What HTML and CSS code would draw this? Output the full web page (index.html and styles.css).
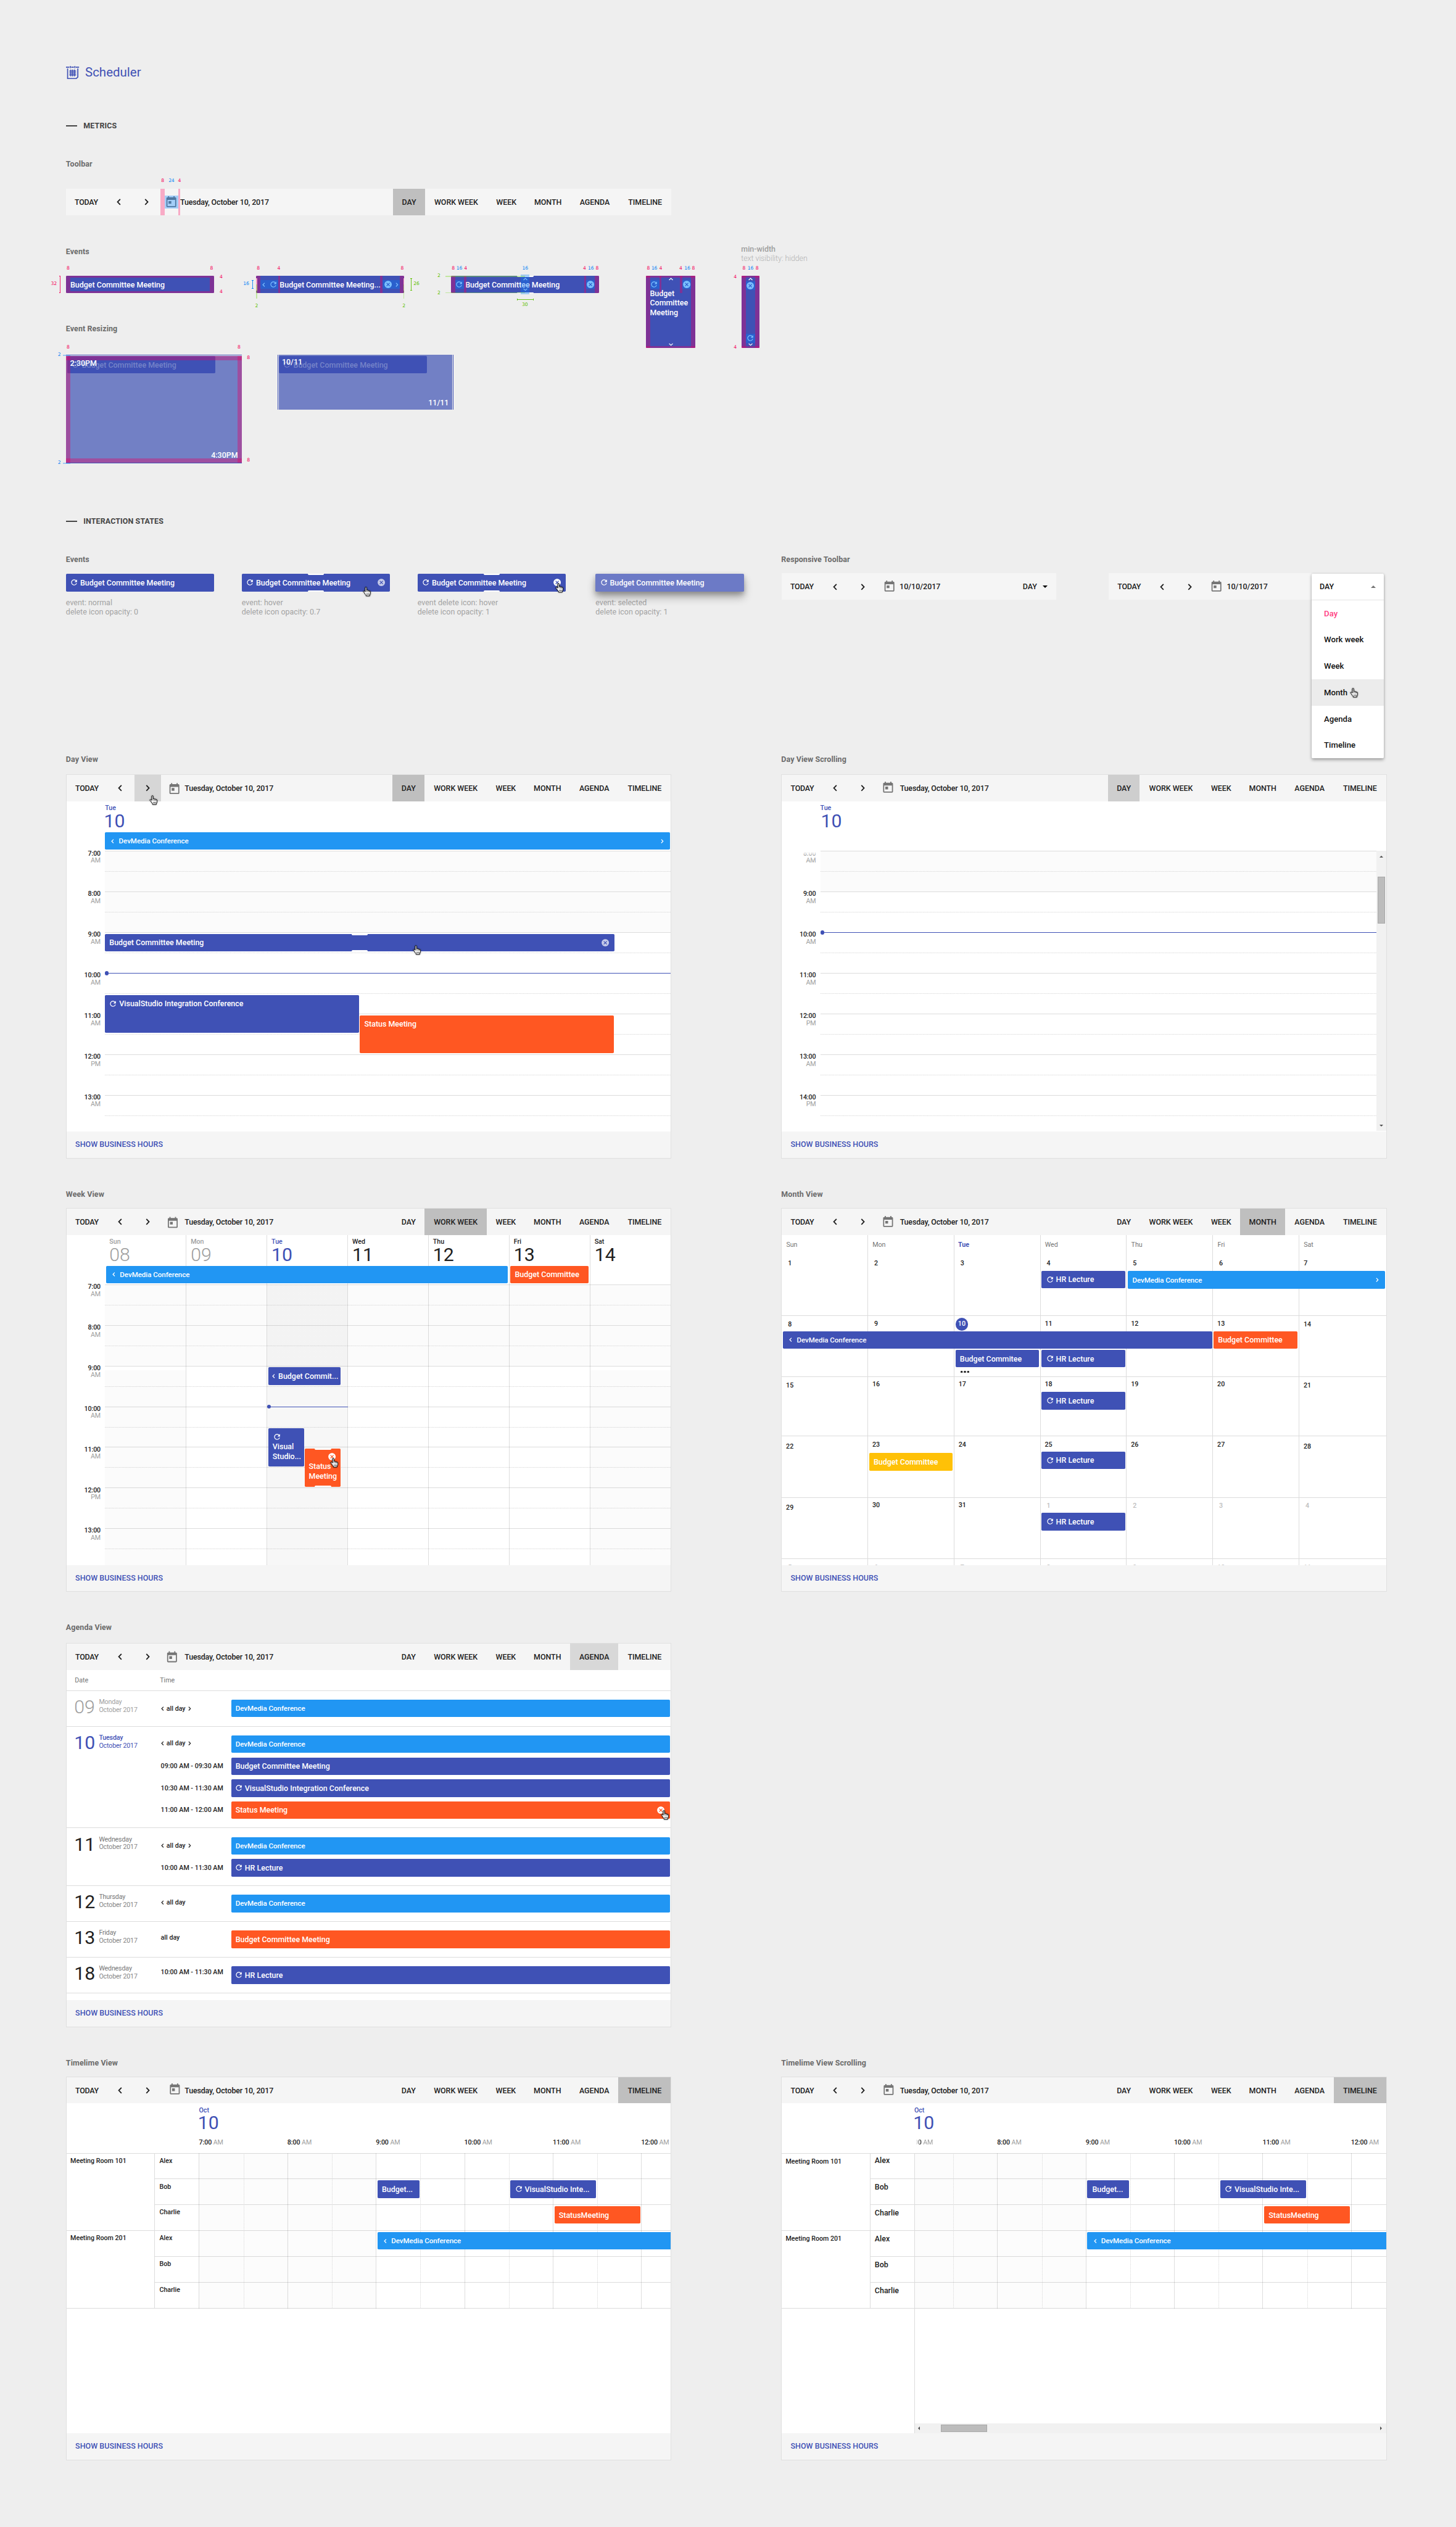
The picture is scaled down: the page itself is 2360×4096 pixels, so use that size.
FILE: index.html
```html
<!DOCTYPE html>
<html lang="en">
<head>
<meta charset="utf-8">
<title>Scheduler</title>
<link rel="stylesheet" href="styles.css">
</head>
<body>
<svg class="defs" xmlns="http://www.w3.org/2000/svg">
  <symbol id="today" viewBox="0 0 24 24"><path d="M19 3h-1V1h-2v2H8V1H6v2H5c-1.11 0-1.99.9-1.99 2L3 19c0 1.1.89 2 2 2h14c1.1 0 2-.9 2-2V5c0-1.1-.9-2-2-2zm0 16H5V8h14v11zM7 10h5v5H7z" fill="currentColor"/></symbol>
  <symbol id="loop" viewBox="0 0 24 24"><path d="M17.65 6.35C16.2 4.9 14.21 4 12 4c-4.42 0-7.99 3.58-7.99 8s3.57 8 7.99 8c3.73 0 6.84-2.55 7.73-6h-2.08c-.82 2.33-3.04 4-5.65 4-3.31 0-6-2.69-6-6s2.69-6 6-6c1.66 0 3.14.69 4.22 1.78L13 11h7V4l-2.35 2.35z" fill="currentColor"/></symbol>
  <symbol id="cancel" viewBox="0 0 24 24"><path d="M12 2C6.47 2 2 6.47 2 12s4.47 10 10 10 10-4.47 10-10S17.53 2 12 2zm5 13.59L15.59 17 12 13.41 8.41 17 7 15.59 10.59 12 7 8.41 8.41 7 12 10.59 15.59 7 17 8.41 13.41 12 17 15.59z" fill="currentColor"/></symbol>
  <symbol id="left" viewBox="0 0 8 12"><path d="M6.6 1L1.8 6l4.8 5" fill="none" stroke="currentColor" stroke-width="2.1"/></symbol>
  <symbol id="right" viewBox="0 0 8 12"><path d="M1.4 1l4.8 5-4.8 5" fill="none" stroke="currentColor" stroke-width="2.1"/></symbol>
  <symbol id="up" viewBox="0 0 12 8"><path d="M1 6.6l5-4.8 5 4.8" fill="none" stroke="currentColor" stroke-width="2.1"/></symbol>
  <symbol id="down" viewBox="0 0 12 8"><path d="M1 1.4l5 4.8 5-4.8" fill="none" stroke="currentColor" stroke-width="2.1"/></symbol>
  <symbol id="hand" viewBox="0 0 16 18"><path d="M4.5 2Q4.5.8 5.7.8 7 .8 7 2V6.3Q9.2 5.6 9.5 7 11.4 6.3 11.8 7.8 14 7.3 14 9.2V12Q14 14 12.8 15V16.8H6V15.4Q4.8 14.4 3.8 12.4 2.6 10.6 1.5 9.6.6 8.6 1.6 8 2.8 7.4 4.5 9.4Z" fill="#fff" stroke="#000" stroke-width="1.1"/><path d="M7 6.3V9.8M9.5 7V10M11.8 8V10.3M7.5 12V15M9.6 12V15M11.6 12V15" stroke="#000" stroke-width=".8"/></symbol>
  <symbol id="logo" viewBox="0 0 24 24"><path d="M0 2h6M9.5 2h4.8M17.8 2H24M2.9 4.6V23h15.6l3-3V4.6" fill="none" stroke="currentColor" stroke-width="1.9"/><path d="M7.9 0v4M16.1 0v4M8.7 6.6v12.2M12.1 6.6v12.2M15.5 6.6v12.2M6 9.3h12.4M6 12.7h12.4M6 16.1h12.4" stroke="currentColor" stroke-width="1.8"/></symbol>
</svg>

<main class="page">
  <header class="brand"><svg><use href="#logo"/></svg><span>Scheduler</span></header>

  <h2 class="section">METRICS</h2>
  <h3 class="label m-toolbar">Toolbar</h3>
  <div class="toolbar bare">
    <span class="today">TODAY</span>
    <span class="nav"><svg><use href="#left"/></svg></span>
    <span class="nav"><svg><use href="#right"/></svg></span>
    <svg class="cal"><use href="#today"/></svg>
    <span class="date">Tuesday, October 10, 2017</span>
    <nav class="tabs"><b class="on">DAY</b><b>WORK WEEK</b><b>WEEK</b><b>MONTH</b><b>AGENDA</b><b>TIMELINE</b></nav>
    <i class="pk" style="--x:172px;--y:0px;--w:8px;--h:48px"></i>
    <i class="bl" style="--x:180px;--y:12px;--w:24px;--h:24px"></i>
    <i class="pk" style="--x:204px;--y:0px;--w:4px;--h:48px"></i>
    <em class="cp" style="--x:176px;--y:-14px">8</em>
    <em class="cb" style="--x:192px;--y:-14px">24</em>
    <em class="cp" style="--x:206.5px;--y:-14px">4</em>
  </div>

  <section class="metrics">
    <div class="m-left">
      <h3 class="label">Events</h3>
      <div class="m-row">
        <div class="spec">
          <div class="ev">Budget Committee Meeting</div>
          <i class="pk" style="--x:0px;--y:0px;--w:8px;--h:32px"></i>
          <i class="pk" style="--x:262px;--y:0px;--w:8px;--h:32px"></i>
          <i class="pk" style="--x:8px;--y:0px;--w:254px;--h:4px"></i>
          <i class="pk" style="--x:8px;--y:28px;--w:254px;--h:4px"></i>
          <s class="vbeam cp" style="--x:-12.5px;--y:0px;--h:32px"></s>
          <em class="cp" style="--x:-22px;--y:15.5px">32</em>
          <em class="cp" style="--x:4px;--y:-13.5px">8</em>
          <em class="cp" style="--x:265px;--y:-13.5px">8</em>
          <em class="cp" style="--x:282.5px;--y:2.5px">4</em>
          <em class="cp" style="--x:282.5px;--y:29.5px">4</em>
        </div>
        <div class="spec">
          <div class="ev wide"><svg class="chev"><use href="#left"/></svg><svg class="ic"><use href="#loop"/></svg><span>Budget Committee Meeting...</span><svg class="ic x"><use href="#cancel"/></svg><svg class="chev"><use href="#right"/></svg></div>
          <i class="wh" style="--x:0px;--y:5px;--w:2px;--h:22px"></i>
          <i class="wh" style="--x:268px;--y:5px;--w:2px;--h:22px"></i>
          <i class="pk" style="--x:0px;--y:0px;--w:8px;--h:32px"></i>
          <i class="bl" style="--x:8px;--y:8px;--w:32px;--h:16px"></i>
          <i class="pk" style="--x:40px;--y:0px;--w:4px;--h:32px"></i>
          <i class="pk" style="--x:226px;--y:0px;--w:4px;--h:32px"></i>
          <i class="bl" style="--x:230px;--y:8px;--w:32px;--h:16px"></i>
          <i class="pk" style="--x:262px;--y:0px;--w:8px;--h:32px"></i>
          <i class="gr" style="--x:0px;--y:16px;--w:2px;--h:26px"></i>
          <i class="gr" style="--x:268px;--y:16px;--w:2px;--h:26px"></i>
          <s class="vbeam cb" style="--x:-7.5px;--y:8px;--h:16px"></s>
          <em class="cb" style="--x:-18px;--y:15.5px">16</em>
          <em class="cp" style="--x:4px;--y:-13.5px">8</em>
          <em class="cp" style="--x:41.5px;--y:-13.5px">4</em>
          <em class="cp" style="--x:266px;--y:-13.5px">8</em>
          <em class="cg" style="--x:1px;--y:56px">2</em>
          <em class="cg" style="--x:269px;--y:56px">2</em>
          <s class="vbeam cg" style="--x:281px;--y:5px;--h:22px"></s>
          <em class="cg" style="--x:292px;--y:15.5px">26</em>
        </div>
        <div class="spec">
          <div class="ev hover"><svg class="ic"><use href="#loop"/></svg><span>Budget Committee Meeting</span><svg class="ic x"><use href="#cancel"/></svg></div>
          <svg class="vup"><use href="#up"/></svg><svg class="vdn"><use href="#down"/></svg>
          <i class="pk" style="--x:0px;--y:0px;--w:8px;--h:32px"></i>
          <i class="bl" style="--x:8px;--y:8px;--w:16px;--h:16px"></i>
          <i class="pk" style="--x:24px;--y:0px;--w:4px;--h:32px"></i>
          <i class="bl" style="--x:127px;--y:-2px;--w:16px;--h:36px"></i>
          <i class="pk" style="--x:242px;--y:0px;--w:4px;--h:32px"></i>
          <i class="bl" style="--x:246px;--y:8px;--w:16px;--h:16px"></i>
          <i class="pk" style="--x:262px;--y:0px;--w:8px;--h:32px"></i>
          <i class="gr" style="--x:-10px;--y:0px;--w:145px;--h:2px"></i>
          <i class="gr" style="--x:-10px;--y:30px;--w:145px;--h:2px"></i>
          <em class="cp" style="--x:4px;--y:-13.5px">8</em>
          <em class="cb" style="--x:15px;--y:-13.5px">16</em>
          <em class="cp" style="--x:26.5px;--y:-13.5px">4</em>
          <em class="cb" style="--x:135px;--y:-13.5px">16</em>
          <em class="cp" style="--x:243px;--y:-13.5px">4</em>
          <em class="cb" style="--x:254.5px;--y:-13.5px">16</em>
          <em class="cp" style="--x:266px;--y:-13.5px">8</em>
          <em class="cg" style="--x:-22px;--y:.5px">2</em>
          <em class="cg" style="--x:-22px;--y:31.5px">2</em>
          <s class="hbeam cg" style="--x:120px;--y:42px;--w:30px"></s>
          <em class="cg" style="--x:134.5px;--y:53.5px">30</em>
        </div>
      </div>
      <h3 class="label m-resize">Event Resizing</h3>
      <div class="r-row">
        <div class="rz tall">
          <div class="ghost ghost-a"><svg class="ic"><use href="#loop"/></svg><span>Budget Committee Meeting</span></div>
          <strong class="rz-start">2:30PM</strong><strong class="rz-end">4:30PM</strong>
          <i class="pk" style="--x:0px;--y:2px;--w:8px;--h:194px"></i>
          <i class="pk" style="--x:312px;--y:2px;--w:8px;--h:194px"></i>
          <i class="pk" style="--x:0px;--y:2px;--w:320px;--h:8px"></i>
          <i class="pk" style="--x:0px;--y:188px;--w:320px;--h:8px"></i>
          <i class="bl" style="--x:-6px;--y:0px;--w:14px;--h:2px"></i>
          <i class="bl" style="--x:-6px;--y:196px;--w:14px;--h:2px"></i>
          <em class="cp" style="--x:4px;--y:-13.5px">8</em>
          <em class="cp" style="--x:315px;--y:-13.5px">8</em>
          <em class="cp" style="--x:332px;--y:5.5px">8</em>
          <em class="cp" style="--x:332px;--y:192.5px">8</em>
          <em class="cb" style="--x:-12px;--y:.5px">2</em>
          <em class="cb" style="--x:-12px;--y:196.5px">2</em>
        </div>
        <div class="rz flat">
          <div class="ghost ghost-b"><svg class="ic"><use href="#loop"/></svg><span>Budget Committee Meeting</span></div>
          <strong class="rz-start">10/11</strong><strong class="rz-end">11/11</strong>
        </div>
      </div>
    </div>
    <div class="spec tallspec">
      <div class="ev stack"><svg class="ic"><use href="#loop"/></svg><svg class="ic x"><use href="#cancel"/></svg><span>Budget Committee Meeting</span></div>
      <svg class="vup"><use href="#up"/></svg><svg class="vdn"><use href="#down"/></svg>
      <i class="pk" style="--x:0px;--y:0px;--w:8px;--h:132px"></i>
      <i class="pk" style="--x:82px;--y:0px;--w:8px;--h:132px"></i>
      <i class="pk" style="--x:0px;--y:0px;--w:90px;--h:4px"></i>
      <i class="pk" style="--x:0px;--y:128px;--w:90px;--h:4px"></i>
      <i class="bl" style="--x:8px;--y:8px;--w:16px;--h:16px"></i>
      <i class="pk" style="--x:24px;--y:0px;--w:4px;--h:32px"></i>
      <i class="pk" style="--x:62px;--y:0px;--w:4px;--h:32px"></i>
      <i class="bl" style="--x:66px;--y:8px;--w:16px;--h:16px"></i>
      <em class="cp" style="--x:4px;--y:-13.5px">8</em>
      <em class="cb" style="--x:15px;--y:-13.5px">16</em>
      <em class="cp" style="--x:26.5px;--y:-13.5px">4</em>
      <em class="cp" style="--x:63px;--y:-13.5px">4</em>
      <em class="cb" style="--x:75px;--y:-13.5px">16</em>
      <em class="cp" style="--x:86px;--y:-13.5px">8</em>
    </div>
    <div class="spec thinspec">
      <p class="note"><b>min-width</b><br>text visibility: hidden</p>
      <div class="ev thin"><svg class="ic"><use href="#cancel"/></svg><svg class="ic"><use href="#loop"/></svg></div>
      <svg class="vup"><use href="#up"/></svg><svg class="vdn"><use href="#down"/></svg>
      <i class="pk" style="--x:0px;--y:0px;--w:8px;--h:132px"></i>
      <i class="pk" style="--x:24px;--y:0px;--w:8px;--h:132px"></i>
      <i class="pk" style="--x:0px;--y:0px;--w:32px;--h:4px"></i>
      <i class="pk" style="--x:0px;--y:128px;--w:32px;--h:4px"></i>
      <i class="bl" style="--x:8px;--y:10px;--w:16px;--h:16px"></i>
      <i class="bl" style="--x:8px;--y:106px;--w:16px;--h:16px"></i>
      <em class="cp" style="--x:4px;--y:-13.5px">8</em>
      <em class="cb" style="--x:16px;--y:-13.5px">16</em>
      <em class="cp" style="--x:28px;--y:-13.5px">8</em>
      <em class="cp" style="--x:-12px;--y:2.5px">4</em>
      <em class="cp" style="--x:-12px;--y:130.5px">4</em>
    </div>
  </section>

  <h2 class="section states-title">INTERACTION STATES</h2>
  <section class="states">
    <div>
      <h3 class="label">Events</h3>
      <div class="s-row">
        <figure><div class="ev"><svg class="ic"><use href="#loop"/></svg><span>Budget Committee Meeting</span></div><figcaption>event: normal<br>delete icon opacity: 0</figcaption></figure>
        <figure><div class="ev hover"><svg class="ic"><use href="#loop"/></svg><span>Budget Committee Meeting</span><svg class="ic x dim"><use href="#cancel"/></svg><svg class="cursor" style="--x:220.5px;--y:23px"><use href="#hand"/></svg></div><figcaption>event: hover<br>delete icon opacity: 0.7</figcaption></figure>
        <figure><div class="ev hover"><svg class="ic"><use href="#loop"/></svg><span>Budget Committee Meeting</span><svg class="ic x"><use href="#cancel"/></svg><svg class="cursor" style="--x:251px;--y:16px"><use href="#hand"/></svg></div><figcaption>event delete icon: hover<br>delete icon opacity: 1</figcaption></figure>
        <figure><div class="ev picked"><svg class="ic"><use href="#loop"/></svg><span>Budget Committee Meeting</span></div><figcaption>event: selected<br>delete icon opacity: 1</figcaption></figure>
      </div>
    </div>
    <div>
      <h3 class="label">Responsive Toolbar</h3>
      <div class="t-row">
        <div class="toolbar small">
          <span class="today">TODAY</span><span class="nav"><svg><use href="#left"/></svg></span><span class="nav"><svg><use href="#right"/></svg></span><svg class="cal"><use href="#today"/></svg><span class="date plain">10/10/2017</span>
          <span class="pick">DAY<u class="tri"></u></span>
        </div>
        <div class="toolbar small">
          <span class="today">TODAY</span><span class="nav"><svg><use href="#left"/></svg></span><span class="nav"><svg><use href="#right"/></svg></span><svg class="cal"><use href="#today"/></svg><span class="date plain">10/10/2017</span>
          <ul class="menu"><li class="cur">DAY<u class="tri upw"></u></li><li class="sel">Day</li><li>Work week</li><li>Week</li><li class="hov">Month<svg class="cursor" style="--x:70px;--y:16px"><use href="#hand"/></svg></li><li>Agenda</li><li>Timeline</li></ul>
        </div>
      </div>
    </div>
  </section>

  <section class="views">
    <!-- Day view -->
    <article class="view v1">
      <h3 class="label">Day View</h3>
      <div class="panel">
        <div class="toolbar c-day"><span class="today">TODAY</span><span class="nav"><svg><use href="#left"/></svg></span><span class="nav hot"><svg><use href="#right"/></svg><svg class="cursor" style="--x:27px;--y:37px"><use href="#hand"/></svg></span><svg class="cal"><use href="#today"/></svg><span class="date">Tuesday, October 10, 2017</span><nav class="tabs"><b class="on">DAY</b><b>WORK WEEK</b><b>WEEK</b><b>MONTH</b><b>AGENDA</b><b>TIMELINE</b></nav></div>
        <div class="body">
          <div class="head"><div class="dh now flush">Tue<span>10</span></div></div>
          <div class="hours">
            <div class="hour off"><p>7:00<br><small>AM</small></p></div>
            <div class="hour off"><p>8:00<br><small>AM</small></p></div>
            <div class="hour"><p>9:00<br><small>AM</small></p></div>
            <div class="hour"><p>10:00<br><small>AM</small></p></div>
            <div class="hour"><p>11:00<br><small>AM</small></p></div>
            <div class="hour"><p>12:00<br><small>PM</small></p></div>
            <div class="hour"><p>13:00<br><small>AM</small></p></div>
          </div>
          <div class="ev at blue" style="--x:70px;--y:56px;--w:1028px"><svg class="chev"><use href="#left"/></svg><span>DevMedia Conference</span><svg class="chev end"><use href="#right"/></svg></div>
          <div class="ev at hover" style="--x:70px;--y:241px;--w:927px"><span>Budget Committee Meeting</span><svg class="ic x dim"><use href="#cancel"/></svg><svg class="cursor" style="--x:560px;--y:21px"><use href="#hand"/></svg></div>
          <div class="nowline" style="--x:70px;--y:312px;--w:1030px"></div>
          <div class="ev at block" style="--x:70px;--y:352px;--w:462px"><svg class="ic"><use href="#loop"/></svg><span>VisualStudio Integration Conference</span></div>
          <div class="ev at block red" style="--x:534px;--y:389px;--w:462px"><span>Status Meeting</span></div>
        </div>
        <footer>SHOW BUSINESS HOURS</footer>
      </div>
    </article>

    <article class="view v1">
      <h3 class="label">Day View Scrolling</h3>
      <div class="panel">
        <div class="toolbar c-dsc"><span class="today">TODAY</span><span class="nav"><svg><use href="#left"/></svg></span><span class="nav"><svg><use href="#right"/></svg></span><svg class="cal"><use href="#today"/></svg><span class="date">Tuesday, October 10, 2017</span><nav class="tabs"><b class="on mid">DAY</b><b>WORK WEEK</b><b>WEEK</b><b>MONTH</b><b>AGENDA</b><b>TIMELINE</b></nav></div>
        <div class="body">
          <div class="head"><div class="dh now flush">Tue<span class="in">10</span></div></div>
          <div class="hours faded">
            <div class="hour off"><p>8:00<br><small>AM</small></p></div>
            <div class="hour"><p>9:00<br><small>AM</small></p></div>
            <div class="hour"><p>10:00<br><small>AM</small></p></div>
            <div class="hour"><p>11:00<br><small>AM</small></p></div>
            <div class="hour"><p>12:00<br><small>PM</small></p></div>
            <div class="hour"><p>13:00<br><small>AM</small></p></div>
            <div class="hour"><p>14:00<br><small>PM</small></p></div>
          </div>
          <div class="nowline" style="--x:70px;--y:238px;--w:1013px"></div>
          <div class="vscroll"><u></u></div>
        </div>
        <footer>SHOW BUSINESS HOURS</footer>
      </div>
    </article>

    <!-- Week view -->
    <article class="view v2">
      <h3 class="label">Week View</h3>
      <div class="panel">
        <div class="toolbar c-week"><span class="today">TODAY</span><span class="nav"><svg><use href="#left"/></svg></span><span class="nav"><svg><use href="#right"/></svg></span><svg class="cal"><use href="#today"/></svg><span class="date">Tuesday, October 10, 2017</span><nav class="tabs"><b>DAY</b><b class="on">WORK WEEK</b><b>WEEK</b><b>MONTH</b><b>AGENDA</b><b>TIMELINE</b></nav></div>
        <div class="body">
          <div class="head"></div>
          <div class="hours">
            <div class="hour off"><p>7:00<br><small>AM</small></p></div>
            <div class="hour off"><p>8:00<br><small>AM</small></p></div>
            <div class="hour"><p>9:00<br><small>AM</small></p></div>
            <div class="hour"><p>10:00<br><small>AM</small></p></div>
            <div class="hour"><p>11:00<br><small>AM</small></p></div>
            <div class="hour"><p>12:00<br><small>PM</small></p></div>
            <div class="hour"><p>13:00<br><small>AM</small></p></div>
          </div>
          <div class="cols">
            <div class="dh past rest">Sun<span>08</span></div>
            <div class="dh past">Mon<span>09</span></div>
            <div class="dh now tint">Tue<span>10</span></div>
            <div class="dh">Wed<span>11</span></div>
            <div class="dh">Thu<span>12</span></div>
            <div class="dh">Fri<span>13</span></div>
            <div class="dh rest">Sat<span>14</span></div>
          </div>
          <div class="ev at blue" style="--x:72px;--y:56px;--w:731px"><svg class="chev"><use href="#left"/></svg><span>DevMedia Conference</span></div>
          <div class="ev at red" style="--x:808px;--y:56px;--w:142px"><span>Budget Committee</span></div>
          <div class="ev at" style="--x:367px;--y:241px;--w:132px"><svg class="chev tight"><use href="#left"/></svg><span>Budget Commit...</span></div>
          <div class="nowline" style="--x:365px;--y:312px;--w:147px"></div>
          <div class="ev at block two" style="--x:367px;--y:352px;--w:65px"><svg class="ic"><use href="#loop"/></svg><span>Visual Studio...</span></div>
          <div class="ev at block two red hover" style="--x:434px;--y:389px;--w:65px"><svg class="ic x"><use href="#cancel"/></svg><span>Status Meeting</span><svg class="cursor" style="--x:46px;--y:17px"><use href="#hand"/></svg></div>
        </div>
        <footer>SHOW BUSINESS HOURS</footer>
      </div>
    </article>

    <!-- Month view -->
    <article class="view v2">
      <h3 class="label">Month View</h3>
      <div class="panel">
        <div class="toolbar c-month"><span class="today">TODAY</span><span class="nav"><svg><use href="#left"/></svg></span><span class="nav"><svg><use href="#right"/></svg></span><svg class="cal"><use href="#today"/></svg><span class="date">Tuesday, October 10, 2017</span><nav class="tabs"><b>DAY</b><b>WORK WEEK</b><b>WEEK</b><b class="on">MONTH</b><b>AGENDA</b><b>TIMELINE</b></nav></div>
        <div class="body">
          <div class="month">
            <b class="wd">Sun</b><b class="wd">Mon</b><b class="wd now">Tue</b><b class="wd">Wed</b><b class="wd">Thu</b><b class="wd">Fri</b><b class="wd">Sat</b>
            <div><b>1</b></div><div><b>2</b></div><div><b>3</b></div><div><b>4</b></div><div><b>5</b></div><div><b>6</b></div><div class="sat"><b>7</b></div>
            <div><b>8</b></div><div class="d1"><b>9</b></div><div class="d1"><b class="dot">10</b></div><div class="d1"><b>11</b></div><div class="d1"><b>12</b></div><div class="d1"><b>13</b></div><div><b>14</b></div>
            <div><b>15</b></div><div class="d2"><b>16</b></div><div class="d2"><b>17</b></div><div class="d2"><b>18</b></div><div class="d2"><b>19</b></div><div class="d2"><b>20</b></div><div><b>21</b></div>
            <div class="u3"><b>22</b></div><div><b>23</b></div><div><b>24</b></div><div><b>25</b></div><div><b>26</b></div><div><b>27</b></div><div class="u3"><b>28</b></div>
            <div class="u2"><b>29</b></div><div class="d2"><b>30</b></div><div class="d2"><b>31</b></div><div class="next"><b>1</b></div><div class="next"><b>2</b></div><div class="next"><b>3</b></div><div class="next"><b>4</b></div>
            <div class="next last"><b>5</b></div><div class="next last"><b>6</b></div><div class="next last"><b>7</b></div><div class="next last"><b>8</b></div><div class="next last"><b>9</b></div><div class="next last"><b>10</b></div><div class="next last"><b>11</b></div>
          </div>
          <div class="ev at" style="--x:473px;--y:65px;--w:152px"><svg class="ic"><use href="#loop"/></svg><span>HR Lecture</span></div>
          <div class="ev at blue" style="--x:630px;--y:66px;--w:468px"><span>DevMedia Conference</span><svg class="chev end"><use href="#right"/></svg></div>
          <div class="ev at conf" style="--x:2px;--y:175px;--w:782px"><svg class="chev"><use href="#left"/></svg><span>DevMedia Conference</span></div>
          <div class="ev at red" style="--x:786px;--y:175px;--w:152px"><span>Budget Committee</span></div>
          <div class="ev at" style="--x:316px;--y:209px;--w:152px"><span>Budget Commitee</span></div>
          <div class="ev at" style="--x:473px;--y:209px;--w:152px"><svg class="ic"><use href="#loop"/></svg><span>HR Lecture</span></div>
          <div class="more" style="--x:324px;--y:247px"></div>
          <div class="ev at" style="--x:473px;--y:286px;--w:152px"><svg class="ic"><use href="#loop"/></svg><span>HR Lecture</span></div>
          <div class="ev at gold" style="--x:159px;--y:397px;--w:152px"><span>Budget Committee</span></div>
          <div class="ev at" style="--x:473px;--y:394px;--w:152px"><svg class="ic"><use href="#loop"/></svg><span>HR Lecture</span></div>
          <div class="ev at" style="--x:473px;--y:506px;--w:152px"><svg class="ic"><use href="#loop"/></svg><span>HR Lecture</span></div>
        </div>
        <footer>SHOW BUSINESS HOURS</footer>
      </div>
    </article>

    <!-- Agenda view -->
    <article class="view v1 lone">
      <h3 class="label">Agenda View</h3>
      <div class="panel">
        <div class="toolbar c-agenda"><span class="today">TODAY</span><span class="nav"><svg><use href="#left"/></svg></span><span class="nav"><svg><use href="#right"/></svg></span><svg class="cal"><use href="#today"/></svg><span class="date">Tuesday, October 10, 2017</span><nav class="tabs"><b>DAY</b><b>WORK WEEK</b><b>WEEK</b><b>MONTH</b><b class="on soft">AGENDA</b><b>TIMELINE</b></nav></div>
        <div class="body agenda">
          <div class="ahead"><span>Date</span><span>Time</span></div>
          <div class="arow past"><div class="day"><b>09</b><p>Monday<br><small>October 2017</small></p></div><div class="slots"><div class="slot"><time><svg class="tc"><use href="#left"/></svg>all day<svg class="tc"><use href="#right"/></svg></time><div class="ev blue">DevMedia Conference</div></div></div></div>
          <div class="arow now"><div class="day"><b>10</b><p>Tuesday<br><small>October 2017</small></p></div><div class="slots">
            <div class="slot r1"><time><svg class="tc"><use href="#left"/></svg>all day<svg class="tc"><use href="#right"/></svg></time><div class="ev blue">DevMedia Conference</div></div>
            <div class="slot"><time>09:00 AM - 09:30 AM</time><div class="ev">Budget Committee Meeting</div></div>
            <div class="slot"><time>10:30 AM - 11:30 AM</time><div class="ev"><svg class="ic"><use href="#loop"/></svg><span>VisualStudio Integration Conference</span></div></div>
            <div class="slot"><time>11:00 AM - 12:00 AM</time><div class="ev red"><span>Status Meeting</span><svg class="ic x"><use href="#cancel"/></svg><svg class="cursor" style="--x:781px;--y:16px"><use href="#hand"/></svg></div></div>
          </div></div>
          <div class="arow"><div class="day"><b>11</b><p>Wednesday<br><small>October 2017</small></p></div><div class="slots">
            <div class="slot"><time><svg class="tc"><use href="#left"/></svg>all day<svg class="tc"><use href="#right"/></svg></time><div class="ev blue">DevMedia Conference</div></div>
            <div class="slot"><time>10:00 AM - 11:30 AM</time><div class="ev"><svg class="ic"><use href="#loop"/></svg><span>HR Lecture</span></div></div>
          </div></div>
          <div class="arow"><div class="day"><b>12</b><p>Thursday<br><small>October 2017</small></p></div><div class="slots"><div class="slot r1"><time><svg class="tc"><use href="#left"/></svg>all day</time><div class="ev blue">DevMedia Conference</div></div></div></div>
          <div class="arow"><div class="day"><b>13</b><p>Friday<br><small>October 2017</small></p></div><div class="slots"><div class="slot r2"><time>all day</time><div class="ev red">Budget Committee Meeting</div></div></div></div>
          <div class="arow"><div class="day"><b>18</b><p>Wednesday<br><small>October 2017</small></p></div><div class="slots"><div class="slot r3"><time>10:00 AM - 11:30 AM</time><div class="ev"><svg class="ic"><use href="#loop"/></svg><span>HR Lecture</span></div></div></div></div>
        </div>
        <footer>SHOW BUSINESS HOURS</footer>
      </div>
    </article>

    <!-- Timeline view -->
    <article class="view v2">
      <h3 class="label">Timelime View</h3>
      <div class="panel">
        <div class="toolbar c-tl"><span class="today">TODAY</span><span class="nav"><svg><use href="#left"/></svg></span><span class="nav"><svg><use href="#right"/></svg></span><svg class="cal"><use href="#today"/></svg><span class="date">Tuesday, October 10, 2017</span><nav class="tabs"><b>DAY</b><b>WORK WEEK</b><b>WEEK</b><b>MONTH</b><b>AGENDA</b><b class="on">TIMELINE</b></nav></div>
        <div class="body timeline">
          <div class="thead"><div class="dh now flush">Oct<span>10</span></div>
            <div class="times"><span>7:00 <small>AM</small></span><span>8:00 <small>AM</small></span><span>9:00 <small>AM</small></span><span>10:00 <small>AM</small></span><span>11:00 <small>AM</small></span><span>12:00 <small>AM</small></span></div>
          </div>
          <div class="room"><b>Meeting Room 101</b><div><p>Alex</p><p>Bob</p><p>Charlie</p></div></div>
          <div class="room"><b>Meeting Room 201</b><div><p>Alex</p><p>Bob</p><p>Charlie</p></div></div>
          <div class="ticks"><i class="off"></i><i class="off"></i><i></i><i></i><i></i><i></i></div>
          <div class="ev at" style="--x:566px;--y:140px;--w:76px"><span>Budget...</span></div>
          <div class="ev at" style="--x:808px;--y:140px;--w:156px"><svg class="ic"><use href="#loop"/></svg><span>VisualStudio Inte...</span></div>
          <div class="ev at red" style="--x:888px;--y:187px;--w:156px"><span>StatusMeeting</span></div>
          <div class="ev at blue cut" style="--x:566px;--y:234px;--w:534px"><svg class="chev"><use href="#left"/></svg><span>DevMedia Conference</span></div>
        </div>
        <footer>SHOW BUSINESS HOURS</footer>
      </div>
    </article>

    <article class="view v2">
      <h3 class="label">Timelime View Scrolling</h3>
      <div class="panel">
        <div class="toolbar c-tsc"><span class="today">TODAY</span><span class="nav"><svg><use href="#left"/></svg></span><span class="nav"><svg><use href="#right"/></svg></span><svg class="cal"><use href="#today"/></svg><span class="date">Tuesday, October 10, 2017</span><nav class="tabs"><b>DAY</b><b>WORK WEEK</b><b>WEEK</b><b>MONTH</b><b>AGENDA</b><b class="on">TIMELINE</b></nav></div>
        <div class="body timeline scrolled">
          <div class="thead"><div class="dh now flush">Oct<span>10</span></div>
            <div class="times"><span>7:00 <small>AM</small></span><span>8:00 <small>AM</small></span><span>9:00 <small>AM</small></span><span>10:00 <small>AM</small></span><span>11:00 <small>AM</small></span><span>12:00 <small>AM</small></span></div>
          </div>
          <div class="room"><b>Meeting Room 101</b><div><p>Alex</p><p>Bob</p><p>Charlie</p></div></div>
          <div class="room"><b>Meeting Room 201</b><div><p>Alex</p><p>Bob</p><p>Charlie</p></div></div>
          <div class="ticks"><i class="off"></i><i class="off"></i><i></i><i></i><i></i><i></i></div>
          <div class="ev at pad" style="--x:556px;--y:140px;--w:76px"><span>Budget...</span></div>
          <div class="ev at" style="--x:798px;--y:140px;--w:156px"><svg class="ic"><use href="#loop"/></svg><span>VisualStudio Inte...</span></div>
          <div class="ev at red" style="--x:878px;--y:187px;--w:156px"><span>StatusMeeting</span></div>
          <div class="ev at blue cut" style="--x:556px;--y:234px;--w:544px"><svg class="chev"><use href="#left"/></svg><span>DevMedia Conference</span></div>
          <div class="hscroll"><u></u></div>
        </div>
        <footer>SHOW BUSINESS HOURS</footer>
      </div>
    </article>
  </section>
</main>
</body>
</html>
```
FILE: styles.css
```css
*{box-sizing:border-box}
html{background:#eee}
body{margin:0;background:#eee;font-family:Roboto,"Liberation Sans",sans-serif;overflow:hidden;height:4096px}
h2,h3,p,ul,figure{margin:0;padding:0;font-weight:inherit}
i,em{font-style:normal}
s,u{text-decoration:none}
svg{display:block;flex:none;overflow:visible}
.defs{position:absolute;width:0;height:0}

.page{zoom:.8905;width:2650px;height:4600px;padding:120px 0 0 120px;font-size:14px;font-weight:500;color:#212121}
.brand{display:flex;height:24px;color:#3f51b5;font-size:23px;font-weight:400}
.brand svg{width:24px;height:24px}
.brand span{margin-left:11px;line-height:23px}
.section{display:flex;align-items:center;height:20px;margin-top:75px;font-size:14px;font-weight:700;color:#444;letter-spacing:.12px}
.section::before{content:"";width:20px;height:2px;margin-right:12px;background:#444}
.label{height:20px;line-height:20px;font-weight:700;font-size:14px;color:#6b6b6b;letter-spacing:.1px}
.m-toolbar{margin-top:50px;margin-bottom:35px}

/* toolbar */
.toolbar{position:relative;display:flex;align-items:center;width:1102px;height:48px;background:#f5f5f5}
.panel .toolbar{width:1100px}
.today{width:73px;padding-left:16px;letter-spacing:-.3px}
.nav{position:relative;display:flex;align-items:center;justify-content:center;width:48px;height:48px}
.nav + .nav{margin-left:3px}
.nav svg:not(.cursor){width:8px;height:12px}
.nav.hot{background:#d6d6d6}
.cal{width:24px;height:24px;margin-left:12px;color:#757575}
.date{margin-left:7px;letter-spacing:-.165px}
.date.plain{letter-spacing:0}
.bare .cal{margin-left:8px}
.bare .date{margin-left:4px}
.bare .nav{left:-1px}
.c-day .cal{transform:translate(0,1.6px)}
.c-dsc .cal{transform:translate(-2.5px,-1px)}
.c-week .cal{transform:translate(-3px,1.7px)}
.c-month .cal{transform:translate(-2.5px,0)}
.c-agenda .cal{transform:translate(-4.3px,.8px)}
.c-tl .cal{transform:translate(.8px,-1px)}
.c-tsc .cal{transform:translate(-1.5px,0)}
.tabs{display:grid;grid-template-columns:58px 113.5px 69px 82.5px 88px 95.5px;margin-left:auto;align-self:stretch}
.tabs b{display:flex;align-items:center;justify-content:center;font-weight:500;letter-spacing:-.05px}
.tabs .on{background:#bfbfbf}
.tabs .on.mid{background:#cecece}
.tabs .on.soft{background:#d8d8d8}
.cursor{position:absolute;left:var(--x);top:var(--y);width:16px;height:18px;filter:drop-shadow(1px 1px 1px rgba(0,0,0,.5));z-index:5}

/* events */
.ev{position:relative;display:flex;align-items:center;height:32px;width:270px;padding:0 8px;border-radius:2px;background:#3f51b5;color:#fff;white-space:nowrap}
.ev.at{position:absolute;left:var(--x);top:var(--y);width:var(--w)}
.ev.blue{background:#2196f3}
.ev.blue,.ev.conf{font-size:13px;letter-spacing:-.05px}
.ev.red{background:#ff5722}
.ev.gold{background:#ffc107}
.ev.cut{border-radius:2px 0 0 2px}
.ic{width:16px;height:16px;margin-left:-1px;margin-right:3px}
.ic.x{margin:0 0 0 auto}
.ic.dim{opacity:.7}
.chev{width:5.4px;height:8px;margin:0 8.4px 0 3.4px}
.chev.end{margin:0 3px 0 auto}
.chev.tight{margin:0 6px 0 -1px}
.ev.hover::before,.ev.hover::after{content:"";position:absolute;left:calc(50% - 15px);top:0;width:30px;height:2px;background:#fff;border-radius:0 0 2px 2px}
.ev.hover::after{top:auto;bottom:0;border-radius:2px 2px 0 0}
.ev.block{height:69px;align-items:flex-start;padding-top:8px;line-height:16px}
.ev.block.two{flex-wrap:wrap;white-space:normal;line-height:17.3px;align-content:flex-start;padding:8px 0 0 8px}
.ev.block.two .ic{margin:0}
.ev.block.two span{width:57px;padding-top:1px;white-space:normal}
.ev.block.two.red{padding-left:7px;padding-top:7px}
.ev.block.two.red .ic{margin:0 0 0 34px}
.ev.pad{padding-left:9px}
.ev.picked{background:#6c7ac6;box-shadow:0 10px 16px rgba(0,0,0,.3),0 4px 8px rgba(0,0,0,.18)}

/* measurement overlays */
.spec{position:relative}
.spec i,.toolbar>i,.rz>i{position:absolute;left:var(--x);top:var(--y);width:var(--w);height:var(--h)}
.pk{background:rgba(228,0,100,.38)}
.toolbar .pk{background:rgba(255,0,90,.3)}
.bl{background:rgba(0,128,255,.33)}
.gr{background:rgba(130,220,50,.42)}
.wh{background:#fff}
.spec em,.toolbar em,.rz em{position:absolute;left:calc(var(--x) - 20px);top:calc(var(--y) - 6px);width:40px;text-align:center;line-height:12px;font-family:"DejaVu Sans",sans-serif;font-size:8.6px;font-weight:400;letter-spacing:-.2px}
.cp{color:#f50057}
.cb{color:#0a84f5}
.cg{color:#5dbf00}
.vbeam{position:absolute;left:var(--x);top:var(--y);width:3px;height:var(--h);border:solid currentColor;border-width:1px 0;background:linear-gradient(currentColor,currentColor) center/1px 100% no-repeat}
.hbeam{position:absolute;left:var(--x);top:var(--y);width:var(--w);height:3px;border:solid currentColor;border-width:0 1px;background:linear-gradient(currentColor,currentColor) center/100% 1px no-repeat}

.metrics{display:flex;margin-top:56px}
.m-left{width:1056px}
.m-row{display:flex;gap:76px;margin-top:34px;height:32px}
.m-row .spec{width:270px}
.m-row .spec:nth-child(3){margin-left:9px}
.ev.wide{padding:0 8px}
.ev.wide .chev{margin:0 7.4px 0 3.4px;color:#b8dcff}
.ev.wide .ic{color:#b8dcff;margin:0 3px 0 0}
.ev.wide .ic.x{margin:0 4px 0 auto}
.ev.wide .chev:last-child{margin:0 3px 0 1px}
.spec .ic{color:#b8dcff}
.spec .ic.x{color:#b8e0ff}
.vup,.vdn{position:absolute;left:calc(50% - 4px);top:4px;width:8px;height:5.4px;color:#fff}
.vdn{top:auto;bottom:4px}
.m-row .vup,.m-row .vdn{color:#b8dcff}
.tallspec{margin-top:54px;width:90px;height:132px}
.thinspec{margin:54px 0 0 84px;width:32px;height:132px}
.ev.stack{width:90px;height:132px;flex-wrap:wrap;align-content:flex-start;white-space:normal;padding:8px 8px 0 7px;line-height:17px}
.ev.stack .ic:not(.x){margin:0}
.ev.stack span{width:75px}
.ev.thin{width:32px;height:132px;flex-direction:column;justify-content:space-between;padding:10px 8px}
.ev.thin .ic{margin:0}
.note{position:absolute;left:-1px;top:-57px;line-height:17px;color:#b3b3b3;font-weight:300;white-space:nowrap;letter-spacing:-.08px}
.note b{font-weight:500;color:#9e9e9e;letter-spacing:0}

.m-resize{margin-top:55px}
.r-row{display:flex;gap:65px;margin-top:37px;height:198px;align-items:flex-start}
.rz{position:relative;width:320px;height:198px;border:solid #3f51b5;border-width:1px 0;padding:1px 0}
.rz::before{content:"";position:absolute;inset:1px 0;background:#7280c5}
.rz>i,.rz>em{margin-top:-1px}
.rz strong{position:absolute;color:#fff;font-weight:500}
.rz-start{left:7.5px;top:6px;line-height:17px}
.rz-end{right:7px;bottom:6px;line-height:17px}
.rz.flat{height:100px;border-width:0 1px;padding:0 1px}
.rz.flat::before{inset:0 1px}
.rz.flat .rz-start{left:7px;top:4px}
.rz.flat .rz-end{bottom:4px}
.ghost{position:absolute;left:2px;top:1px;width:270px;height:32px;border-radius:2px;background:#3f51b5;color:#7583c8;display:flex;align-items:center}
.ghost .ic{margin:0 4px 0 7px}
.ghost-b{left:1px;top:2px}

/* interaction states */
.states-title{margin-top:95px}
.states{display:grid;grid-template-columns:1302px 1100px;height:363px;margin-top:50px}
.s-row{display:grid;grid-template-columns:320px 320px 324px 270px;margin-top:16px}
figcaption{margin-top:11px;line-height:17.2px;font-weight:400;color:#a3a3a3}
.t-row{display:flex;gap:95px;margin-top:15px}
.toolbar.small{width:500px;margin-left:.5px}
.pick{display:flex;align-items:center;margin-left:auto;padding-right:16px}
.tri{width:0;height:0;margin-left:10px;border:5px solid transparent;border-top-color:#000;border-bottom:0}
.tri.upw{margin:0 0 0 auto;border:5px solid transparent;border-bottom-color:#757575;border-top:0}
.menu{position:absolute;right:-1px;top:.7px;width:132px;list-style:none;background:#fff;border-radius:2px;box-shadow:0 3px 6px rgba(0,0,0,.3),0 0 3px rgba(0,0,0,.15);z-index:3}
.menu li{position:relative;display:flex;align-items:center;height:48px;padding-left:23px;font-size:14.8px;color:#111}
.menu .cur{padding:0 15px 0 15px;border-bottom:1px solid #e4e4e4;font-size:14px}
.menu .sel{color:#ff4081}
.menu .hov{background:#ececec}

/* views */
.views{display:grid;grid-template-columns:1102px 1102px;column-gap:200px;row-gap:55px}
.lone{grid-column:1/3}
.panel{width:1102px;height:699px;margin-top:18px;border:1px solid #e0e0e0;background:#fff;display:flex;flex-direction:column}
.v2 .panel{margin-top:15px}
.body{position:relative;height:601px;overflow:hidden}
.panel footer{height:48px;background:#f5f5f5;padding-left:16px;line-height:48px;color:#3f51b5;letter-spacing:.05px}
.head{height:90px;padding-left:70px}
.dh{padding:6px 0 0 8px;font-size:12px;line-height:14px}
.dh span{display:block;margin-top:-1px;font-size:34px;line-height:33px;font-weight:400}
.dh.flush{padding-left:0}
.dh.flush span{margin-left:-2px}
.dh.flush span.in{margin-left:1px}
.dh.now{color:#3f51b5}
.dh.past{color:#9e9e9e}
.dh.past span{font-weight:300}
.hour{display:grid;grid-template-columns:70px 1fr;height:74px}
.hour p{margin-top:-2px;padding-right:8px;text-align:right;font-size:12px;line-height:13px;letter-spacing:-.12px}
small{font-size:12px;font-weight:400;color:#9e9e9e}
.hour::after{content:"";border-top:1px solid #dcdcdc;background:linear-gradient(90deg,#d4d4d4 1px,transparent 1px) 0 36px/2px 1px repeat-x}
.hour.off::after{background-color:#fbfbfb}
.faded{position:relative;width:1083px}
.faded::before{content:"";position:absolute;left:0;top:-4px;width:70px;height:18px;background:linear-gradient(#fff 30%,rgba(255,255,255,.2))}
.nowline{position:absolute;left:var(--x);top:var(--y);width:var(--w);height:1.5px;background:#3f51b5}
.nowline::before{content:"";position:absolute;left:0;top:-3px;width:7px;height:7px;border-radius:50%;background:#3f51b5}
.cols{position:absolute;left:70px;top:0;right:0;bottom:0;display:grid;grid-template-columns:repeat(6,147px) 1fr}
.cols .dh + .dh{border-left:1px solid rgba(0,0,0,.13)}
.cols .dh:nth-child(1){padding-left:8px}
.cols .rest{background:linear-gradient(rgba(0,0,0,.016),rgba(0,0,0,.016)) 0 246px/100% 400px no-repeat}
.cols .tint{background:linear-gradient(rgba(0,0,0,.03),rgba(0,0,0,.03)) 0 90px/100% 520px no-repeat}
.vscroll{position:absolute;right:0;top:90px;width:17px;bottom:1px;background:#f1f1f1}
.vscroll u{position:absolute;left:2px;top:47px;width:13px;height:85px;background:#bcbcbc;border:1px solid #a8a8a8}
.vscroll::before,.vscroll::after{content:"";position:absolute;left:5px;top:9px;border:3.5px solid transparent;border-bottom:4px solid #505050;border-top:0}
.vscroll::after{top:auto;bottom:8px;border:3.5px solid transparent;border-top:4px solid #505050;border-bottom:0}
.hscroll{position:absolute;left:241px;right:0;bottom:1px;height:17px;background:#f1f1f1}
.hscroll u{position:absolute;left:48px;top:2px;width:85px;height:13px;background:#bcbcbc;border:1px solid #a8a8a8}
.hscroll::before,.hscroll::after{content:"";position:absolute;left:7px;top:5px;border:3.5px solid transparent;border-right:4px solid #505050;border-left:0}
.hscroll::after{left:auto;right:7px;border:3.5px solid transparent;border-left:4px solid #505050;border-right:0}

/* month */
.month{display:grid;grid-template-columns:repeat(6,157px) 158px;grid-template-rows:36px 112px 111px 108px 112px 111px 60px;font-size:12px}
.month>*{border-right:1px solid #dcdcdc}
.month>*:nth-child(7n){border-right:0}
.month .wd{padding:12px 0 0 8px;line-height:14px;font-weight:400;color:#757575}
.month .wd.now{color:#3f51b5;font-weight:700;padding-left:7px}
.month div{border-bottom:1px solid #dcdcdc;padding:9px 0 0 7px}
.month div b{display:block;width:15px;text-align:center;font-weight:500;line-height:14px}
.month .d1{padding-top:7.5px}
.month .d2{padding-top:6.5px}
.month .u2{padding-top:10.5px}
.month .u3{padding-top:11.5px}
.month .sat{padding-left:4px}
.month .next{color:#bdbdbd;padding-top:8px}
.month .next.last{padding-top:8.8px}
.month .dot{width:23px;height:23px;line-height:23px;margin:-4.5px 0 0 -5px;border-radius:50%;background:#3f51b5;color:#fff}
.more{position:absolute;left:var(--x);top:var(--y);width:17px;height:4px;background:radial-gradient(circle,#212121 1.9px,transparent 2.2px) 0 0/6px 4px repeat-x}

/* agenda */
.ahead{display:grid;grid-template-columns:155px 1fr;height:38px;padding-left:15px;line-height:38px;border-bottom:1px solid #dcdcdc;font-size:12px;font-weight:400;color:#757575}
.arow{display:grid;grid-template-columns:171.5px 1fr;padding:16px 0;border-bottom:1px solid #dcdcdc}
.day{display:flex;padding-left:14px;height:32px}
.day b{width:45px;font-size:34px;line-height:27px;font-weight:400}
.day p{line-height:14px;font-size:12px;font-weight:400;color:#757575;margin-top:-2px;letter-spacing:-.18px}
.day small{color:#858585}
.past .day,.past .day p,.past .day small{color:#9e9e9e}
.past .day b{font-weight:300}
.now .day,.now .day p,.now .day small{color:#3f51b5}
.now .day p{font-weight:500}
.slots{display:grid;row-gap:8px}
.slot{display:grid;grid-template-columns:129px 797px;align-items:center}
.slot time{display:flex;align-items:center;font-size:12px;gap:5px}
.slot .ev{width:797.5px;padding-left:7px}
.slot .ev .ic:not(.x){margin-left:-2px}
.tc{width:5.4px;height:8px}
.r1 time{transform:translateY(-2px)}
.r2 time{transform:translateY(-3.4px)}
.r3 time{transform:translateY(-5.3px)}

/* timeline */
.thead{height:91px;padding-left:241px;border-bottom:1px solid #dcdcdc;overflow:hidden}
.times{display:flex;margin-top:13px;font-size:12px;line-height:14px;white-space:nowrap}
.times span{width:161px;flex:none;letter-spacing:-.1px}
.room{display:grid;grid-template-columns:160px 1fr;height:141px;border-bottom:1px solid #dcdcdc;font-size:12px}
.room b{padding:7px 0 0 7px;line-height:14px;font-weight:500}
.room div{border-left:1px solid #dcdcdc}
.room p{height:47px;padding:7px 0 0 8px;line-height:14px;border-bottom:1px solid #dcdcdc}
.room p:last-child{border:0}
.ticks{position:absolute;left:241px;right:0;top:90px;height:283px;display:flex;overflow:hidden}
.ticks i{flex:none;width:161px;border-left:1px solid rgba(0,0,0,.13);background:linear-gradient(#d8d8d8 1px,transparent 1px) 80px 0/1px 2px repeat-y}
.ticks .off{background-color:rgba(0,0,0,.012)}
.scrolled::after{content:"";position:absolute;left:241px;top:90px;bottom:0;width:1px;background:#dcdcdc}
.scrolled .ticks i:first-child{margin-left:-10px}
.scrolled .times{margin-left:0;overflow:hidden}
.scrolled .times span:first-child{width:151px;text-indent:-10px;-webkit-mask:linear-gradient(90deg,transparent 3px,#000 12px);mask:linear-gradient(90deg,transparent 3px,#000 12px)}
.scrolled .room b{padding-top:8px}
.scrolled .room p{font-size:14px;padding-top:8px}
.scrolled .room:nth-child(2) p:first-child{padding-top:6px}
```
